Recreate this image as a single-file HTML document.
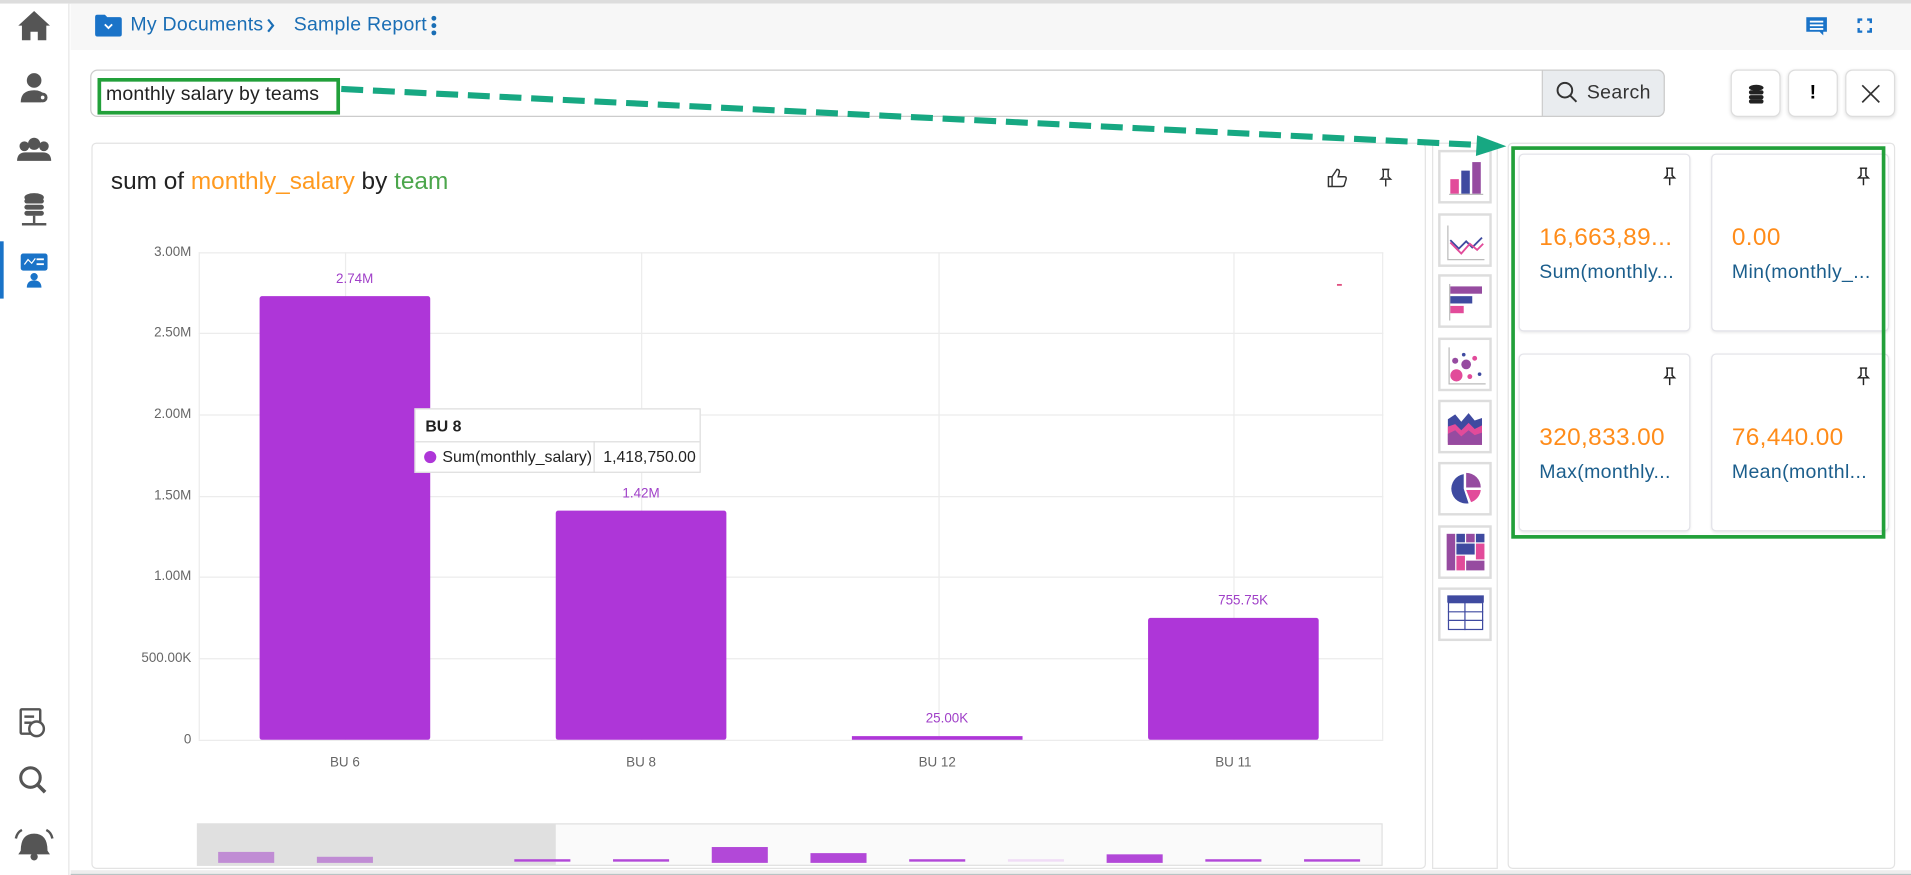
<!DOCTYPE html>
<html><head><meta charset="utf-8"><style>
*{box-sizing:border-box;margin:0;padding:0}
html,body{width:1911px;height:875px;overflow:hidden;background:#fff;font-family:"Liberation Sans",sans-serif}
#w{position:absolute;left:0;top:0;width:1568px;height:718px;transform:scale(1.21875);transform-origin:0 0;background:#fff}
.a{position:absolute}
.ic{position:absolute;width:44px;height:44px;border:2px solid #ddd;background:#fff;left:1180px}
.card{position:absolute;background:#fff;border:1px solid #e2e2e8;border-radius:4px;box-shadow:0 1px 2px rgba(0,0,0,.08)}
.val{position:absolute;left:16px;top:57px;font-size:20px;color:#ff8c1a;letter-spacing:.3px}
.lab{position:absolute;left:16px;top:88px;font-size:16px;color:#1b5e8c;letter-spacing:.3px}
.pin{position:absolute;right:10px;top:10px}
.yl{position:absolute;right:1411px;font-size:11px;color:#666;text-align:right}
.xl{position:absolute;font-size:11px;color:#666;top:620px;width:60px;text-align:center}
.bl{position:absolute;font-size:11px;color:#a040c8;width:80px;text-align:center}
.btn{position:absolute;top:57px;width:41px;height:39px;border:1px solid #ddd;border-radius:6px;background:#fff;box-shadow:0 1px 3px rgba(0,0,0,.12);text-align:center;line-height:37px;font-size:16px}
</style></head><body><div id="w">
<div class="a" style="left:0;top:0;width:1568px;height:3px;background:#ddd"></div>
<div class="a" style="left:0;top:3px;width:57px;height:715px;background:#fff;border-right:1px solid #e6e6e6"></div>
<svg class="a" style="left:0;top:0" width="57" height="718" fill="#555">
<path d="M28 9 L15 21 L18 21 L18 33 L25 33 L25 26 L31 26 L31 33 L38 33 L38 21 L41 21 Z"/>
<circle cx="28" cy="66" r="6"/><path d="M17 84 q0-10 11-10 q6 0 9 4 q-3 2-3 6 Z"/><circle cx="35" cy="80" r="4" fill="#555"/><circle cx="35" cy="80" r="1.5" fill="#fff"/>
<circle cx="20" cy="120" r="4"/><circle cx="28" cy="118" r="5"/><circle cx="36" cy="120" r="4"/><path d="M14 132 q0-7 7-7 h14 q7 0 7 7 Z"/>
<ellipse cx="28" cy="162" rx="8" ry="3.5"/><rect x="20" y="163" width="16" height="4" rx="2"/><rect x="20" y="168" width="16" height="4" rx="2"/><rect x="20" y="173" width="16" height="4" rx="2"/><rect x="27" y="177" width="2" height="6"/><rect x="18" y="183" width="20" height="2"/>
<rect x="0" y="198" width="3" height="47" fill="#1a73c8"/>
<rect x="17" y="208" width="22" height="14" rx="2" fill="#1a73c8"/><path d="M20 217 l3-4 3 3 3-4" stroke="#fff" fill="none"/><rect x="30" y="212" width="6" height="1.5" fill="#fff"/><rect x="30" y="216" width="6" height="1.5" fill="#fff"/>
<circle cx="28" cy="227" r="3" fill="#1a73c8"/><path d="M22 236 q0-6 6-6 q6 0 6 6 Z" fill="#1a73c8"/>
<rect x="17" y="582" width="16" height="20" rx="1" fill="none" stroke="#555" stroke-width="2"/><circle cx="30" cy="598" r="6" fill="#fff" stroke="#555" stroke-width="2"/><rect x="20" y="587" width="8" height="2"/><rect x="20" y="592" width="6" height="2"/>
<circle cx="25" cy="638" r="8" fill="none" stroke="#555" stroke-width="2.5"/><path d="M31 644 l6 6" stroke="#555" stroke-width="3"/>
<path d="M17 698 q0-14 11-14 q11 0 11 14 l2 3 h-26 Z"/><circle cx="28" cy="703" r="3"/><path d="M13 688 q1-5 5-7 M43 688 q-1-5-5-7" stroke="#555" stroke-width="2" fill="none"/>
</svg>
<div class="a" style="left:58px;top:3px;width:1510px;height:38px;background:#f7f7f7"></div>
<svg class="a" style="left:78px;top:12px" width="22" height="18"><path d="M0 2 q0-2 2-2 h6 l2 2 h10 q2 0 2 2 v12 q0 2-2 2 h-18 q-2 0-2-2 Z" fill="#1a73c8"/><path d="M8 8 l3 3 3-3" stroke="#fff" stroke-width="1.5" fill="none"/></svg>
<div class="a" style="left:107px;top:12px;font-size:16px;color:#1a6eb5;letter-spacing:.2px">My Documents</div>
<svg class="a" style="left:218px;top:15px" width="8" height="12" stroke="#1a6eb5" stroke-width="1.8" fill="none"><path d="M2 1l4 5-4 5"/></svg>
<div class="a" style="left:241px;top:12px;font-size:16px;color:#1a6eb5;letter-spacing:.2px">Sample Report</div>
<svg class="a" style="left:353px;top:12px" width="6" height="18" fill="#1a6eb5"><circle cx="3" cy="3" r="2"/><circle cx="3" cy="9" r="2"/><circle cx="3" cy="15" r="2"/></svg>
<svg class="a" style="left:1482px;top:14px" width="18" height="16"><path d="M0 0 h17 v12 h-3 v3 l-3-3 h-11 Z" fill="#1a73c8"/><rect x="3" y="3" width="11" height="1.5" fill="#fff"/><rect x="3" y="6" width="11" height="1.5" fill="#fff"/><rect x="3" y="9" width="11" height="1.5" fill="#fff"/></svg>
<svg class="a" style="left:1524px;top:15px" width="12" height="12" stroke="#1a73c8" stroke-width="2" fill="none"><path d="M1 4V1h3M8 1h3v3M11 8v3H8M4 11H1V8"/></svg>
<div class="a" style="left:74px;top:57px;width:1292px;height:39px;border:1px solid #ccc;border-radius:6px;background:#fff"></div>
<div class="a" style="left:1265px;top:57px;width:101px;height:39px;border:1px solid #ccc;border-radius:0 6px 6px 0;background:#e9ecef"></div>
<svg class="a" style="left:1277px;top:67px" width="18" height="18" stroke="#333" stroke-width="1.6" fill="none"><circle cx="7" cy="7" r="6"/><path d="M11.5 11.5 l5 5"/></svg>
<div class="a" style="left:1302px;top:68px;font-size:16px;color:#333;letter-spacing:.3px">Search</div>
<div class="a" style="left:80px;top:64px;width:199px;height:30px;border:3px solid #22a03a"></div>
<div class="a" style="left:87px;top:69px;font-size:16px;color:#222;letter-spacing:.1px">monthly salary by teams</div>
<div class="btn" style="left:1420px"><svg width="14" height="16" style="margin-top:11px"><ellipse cx="7" cy="3" rx="6" ry="2.5" fill="#222"/><rect x="1" y="5" width="12" height="3.5" rx="1.7" fill="#222"/><rect x="1" y="9" width="12" height="3.5" rx="1.7" fill="#222"/><rect x="1" y="12.5" width="12" height="3.5" rx="1.7" fill="#222"/></svg></div>
<div class="btn" style="left:1467px;font-weight:bold">!</div>
<div class="btn" style="left:1514px"><svg width="16" height="16" style="margin-top:11px" stroke="#333" stroke-width="1.4"><path d="M1 1l14 14M15 1L1 15"/></svg></div>
<div class="a" style="left:75px;top:117px;width:1095px;height:596px;border:1px solid #e3e3e3;border-radius:4px"></div>
<div class="a" style="left:91px;top:138px;font-size:20px;color:#222">sum of <span style="color:#ff9a1f">monthly_salary</span> by <span style="color:#4ca64c">team</span></div>
<svg class="a" style="left:1088px;top:137px" width="18" height="18" stroke="#333" stroke-width="1.2" fill="none"><path d="M2 8h3v8H2zM5 8l4-6q2 0 2 2l-1 4h5q2 0 1.5 2l-1.5 5q-.5 1-2 1H5"/></svg>
<svg class="a" style="left:1131px;top:138px" width="12" height="16" stroke="#333" stroke-width="1.2" fill="none"><path d="M3 1h6M4 1v6l-2 2h8l-2-2V1M6 9v6"/></svg>
<svg class="a" style="left:0;top:0" width="1170" height="718">
<g stroke="#ececec" stroke-width="1">
<line x1="163" y1="207.5" x2="1135" y2="207.5"/><line x1="163" y1="273.5" x2="1135" y2="273.5"/><line x1="163" y1="340.5" x2="1135" y2="340.5"/><line x1="163" y1="407.5" x2="1135" y2="407.5"/><line x1="163" y1="473.5" x2="1135" y2="473.5"/><line x1="163" y1="540.5" x2="1135" y2="540.5"/><line x1="163" y1="607.5" x2="1135" y2="607.5"/>
<line x1="163.5" y1="207" x2="163.5" y2="607"/><line x1="283.5" y1="207" x2="283.5" y2="607"/><line x1="526.5" y1="207" x2="526.5" y2="607"/><line x1="770.5" y1="207" x2="770.5" y2="607"/><line x1="1012.5" y1="207" x2="1012.5" y2="607"/><line x1="1134.5" y1="207" x2="1134.5" y2="607"/>
</g>
<g fill="#ae36d8"><rect x="213" y="243" width="140" height="364" rx="2"/><rect x="456" y="419" width="140" height="188" rx="2"/><rect x="699" y="604" width="140" height="3"/><rect x="942" y="507" width="140" height="100" rx="2"/></g>
<rect x="1097" y="233" width="4" height="1.5" fill="#e05080"/>
<rect x="162" y="676" width="972" height="34" fill="#fafafa" stroke="#e0e0e0"/>
<rect x="162" y="676" width="294" height="34" fill="#e0e0e0"/>
<g fill="#b248d8"><rect x="179" y="699" width="46" height="9" fill="#c08cd4"/><rect x="260" y="703" width="46" height="5" fill="#c08cd4"/><rect x="422" y="705" width="46" height="2"/><rect x="503" y="705" width="46" height="2"/><rect x="584" y="695" width="46" height="13"/><rect x="665" y="700" width="46" height="8"/><rect x="746" y="705" width="46" height="2"/><rect x="827" y="705" width="46" height="2" fill="#f0dcf6"/><rect x="908" y="701" width="46" height="7"/><rect x="989" y="705" width="46" height="2"/><rect x="1070" y="705" width="46" height="2"/></g>
</svg>
<div class="yl" style="top:201px">3.00M</div><div class="yl" style="top:267px">2.50M</div><div class="yl" style="top:334px">2.00M</div><div class="yl" style="top:401px">1.50M</div><div class="yl" style="top:467px">1.00M</div><div class="yl" style="top:534px">500.00K</div><div class="yl" style="top:601px">0</div>
<div class="bl" style="left:251px;top:223px">2.74M</div><div class="bl" style="left:486px;top:399px">1.42M</div><div class="bl" style="left:737px;top:584px">25.00K</div><div class="bl" style="left:980px;top:487px">755.75K</div>
<div class="xl" style="left:253px">BU 6</div><div class="xl" style="left:496px">BU 8</div><div class="xl" style="left:739px">BU 12</div><div class="xl" style="left:982px">BU 11</div>
<div class="a" style="left:340px;top:335px;width:235px;height:53px;background:#fff;border:1px solid #ddd;font-size:13px;color:#222">
<div style="position:absolute;left:8px;top:6px;font-weight:bold">BU 8</div>
<div style="position:absolute;left:0;top:26px;width:233px;border-top:1px solid #ddd"></div>
<div style="position:absolute;left:146px;top:26px;height:26px;border-left:1px solid #ddd"></div>
<div style="position:absolute;left:7px;top:34px;width:10px;height:10px;border-radius:5px;background:#ae36d8"></div>
<div style="position:absolute;left:22px;top:31px">Sum(monthly_salary)</div>
<div style="position:absolute;left:154px;top:31px">1,418,750.00</div>
</div>
<div class="a" style="left:1175px;top:117px;width:54px;height:596px;border:1px solid #e3e3e3"></div>
<div class="ic" style="top:123px"><svg width="40" height="40"><rect x="8" y="22" width="7" height="12" fill="#e24b9a"/><rect x="17" y="15" width="7" height="19" fill="#3f4aa0"/><rect x="26" y="8" width="7" height="26" fill="#964ba0"/><rect x="7" y="34" width="28" height="1" fill="#bbb"/></svg></div>
<div class="ic" style="top:175px"><svg width="40" height="40" fill="none"><path d="M6 8v28h30" stroke="#bbb"/><path d="M8 20l7 7 6-6 5 5 8-8" stroke="#3f4aa0" stroke-width="1.5"/><path d="M8 22l9 9 7-8 6 5 5-5" stroke="#e24b9a" stroke-width="1.5"/></svg></div>
<div class="ic" style="top:225px"><svg width="40" height="40"><rect x="7" y="6" width="1" height="30" fill="#bbb"/><rect x="8" y="8" width="26" height="6" fill="#964ba0"/><rect x="8" y="16" width="18" height="6" fill="#3f4aa0"/><rect x="8" y="24" width="11" height="6" fill="#e24b9a"/></svg></div>
<div class="ic" style="top:277px"><svg width="40" height="40"><path d="M7 6v30h30" stroke="#bbb" fill="none"/><circle cx="13" cy="29" r="5" fill="#e24b9a"/><circle cx="21" cy="20" r="4" fill="#964ba0"/><circle cx="12" cy="17" r="2.5" fill="#964ba0"/><circle cx="19" cy="12" r="1.5" fill="#3f4aa0"/><circle cx="28" cy="15" r="2" fill="#e24b9a"/><circle cx="24" cy="30" r="2" fill="#e24b9a"/><circle cx="32" cy="28" r="1.5" fill="#3f4aa0"/></svg></div>
<div class="ic" style="top:328px"><svg width="40" height="40"><path d="M6 14l6-4 5 6 6-7 5 6 6-2v20H6z" fill="#3f4aa0"/><path d="M6 20l6-2 5 5 6-6 5 5 6-3v16H6z" fill="#e24b9a"/><path d="M6 26l6-3 5 5 6-5 5 4 6-2v10H6z" fill="#964ba0"/></svg></div>
<div class="ic" style="top:379px"><svg width="40" height="40"><path d="M19 8 A12 12 0 1 0 23 32 L19 20Z" fill="#3f4aa0"/><path d="M21 7 A12 12 0 0 1 33 19 L21 19Z" fill="#964ba0"/><path d="M21 21 L33 21 A12 12 0 0 1 25 31Z" fill="#e24b9a"/></svg></div>
<div class="ic" style="top:431px"><svg width="40" height="40"><rect x="5" y="5" width="7" height="30" fill="#964ba0"/><rect x="13" y="5" width="7" height="7" fill="#3f4aa0"/><rect x="21" y="5" width="7" height="7" fill="#964ba0"/><rect x="29" y="5" width="7" height="7" fill="#3f4aa0"/><rect x="13" y="13" width="15" height="9" fill="#3f4aa0"/><rect x="29" y="13" width="7" height="13" fill="#e24b9a"/><rect x="13" y="23" width="7" height="12" fill="#e24b9a"/><rect x="21" y="27" width="15" height="8" fill="#964ba0"/></svg></div>
<div class="ic" style="top:482px"><svg width="40" height="40" fill="none" stroke="#3f4aa0"><rect x="6" y="5" width="29" height="5" fill="#3f4aa0"/><rect x="6.5" y="10.5" width="28" height="22"/><path d="M6 18h29M6 25h29M20 10v23"/></svg></div>
<div class="a" style="left:1237px;top:117px;width:318px;height:596px;border:1px solid #e3e3e3;border-radius:4px"></div>
<div class="card" style="left:1246px;top:126px;width:141px;height:146px"><svg class="pin" width="12" height="16" stroke="#222" stroke-width="1.2" fill="none"><path d="M3 1h6M4 1v6l-2 2h8l-2-2V1M6 9v6"/></svg><div class="val">16,663,89...</div><div class="lab">Sum(monthly...</div></div>
<div class="card" style="left:1404px;top:126px;width:146px;height:146px"><svg class="pin" style="right:14px" width="12" height="16" stroke="#222" stroke-width="1.2" fill="none"><path d="M3 1h6M4 1v6l-2 2h8l-2-2V1M6 9v6"/></svg><div class="val">0.00</div><div class="lab">Min(monthly_...</div></div>
<div class="card" style="left:1246px;top:290px;width:141px;height:146px"><svg class="pin" width="12" height="16" stroke="#222" stroke-width="1.2" fill="none"><path d="M3 1h6M4 1v6l-2 2h8l-2-2V1M6 9v6"/></svg><div class="val">320,833.00</div><div class="lab">Max(monthly...</div></div>
<div class="card" style="left:1404px;top:290px;width:146px;height:146px"><svg class="pin" style="right:14px" width="12" height="16" stroke="#222" stroke-width="1.2" fill="none"><path d="M3 1h6M4 1v6l-2 2h8l-2-2V1M6 9v6"/></svg><div class="val">76,440.00</div><div class="lab">Mean(monthl...</div></div>
<div class="a" style="left:1240px;top:120px;width:307px;height:322px;border:3px solid #22a03a"></div>
<div class="a" style="left:58px;top:714px;width:1510px;height:4px;background:#eee;border-bottom:1px solid #b8c4c4"></div>
<svg class="a" style="left:0;top:0" width="1568" height="718"><line x1="280" y1="73" x2="1214" y2="119" stroke="#17a882" stroke-width="5" stroke-dasharray="18,8"/><polygon points="1236,120 1212,111 1211,128" fill="#17a882"/></svg>
</div></body></html>
